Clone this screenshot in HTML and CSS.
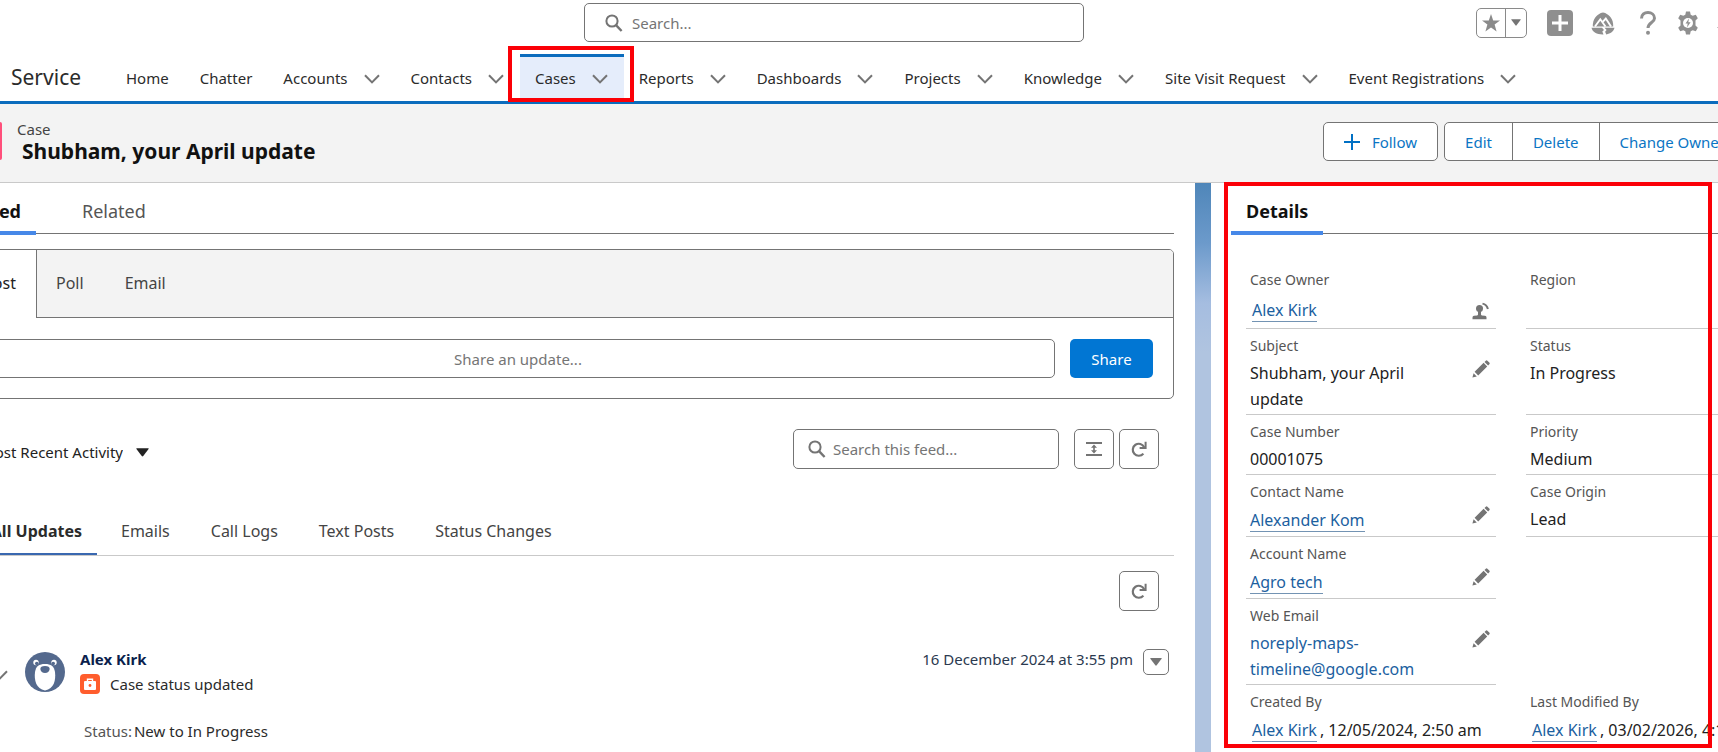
FILE: index.html
```html
<!DOCTYPE html>
<html lang="en">
<head>
<meta charset="utf-8">
<title>Case - Service</title>
<link rel="stylesheet" href="styles.css">
</head>
<body>
<svg class="defs" aria-hidden="true">
  <symbol id="chevron" viewBox="0 0 16 10"><path d="M1 1.2 8 8.4 15 1.2" fill="none" stroke="#747474" stroke-width="2"/></symbol>
  <symbol id="caret" viewBox="0 0 12 8"><path d="M.8 0h10.4q.9 0 .4.8L6.7 7.3q-.7.9-1.4 0L.4.8Q-.1 0 .8 0z" fill="currentColor"/></symbol>
  <symbol id="lens" viewBox="0 0 18 18"><circle cx="7" cy="7" r="5.6" fill="none" stroke="#747474" stroke-width="2"/><path d="M11 11.2 16.6 17" stroke="#747474" stroke-width="2.4"/></symbol>
  <symbol id="refresh" viewBox="0 0 16 16"><path d="M13.2 6.2A6 6 0 1 0 12.4 12.6" fill="none" stroke="#747474" stroke-width="2.2"/><path d="M14.6.8V7H8.6" fill="none" stroke="#747474" stroke-width="2"/></symbol>
  <symbol id="pencil" viewBox="0 0 18 18"><path d="M.4 17.6 1.6 13.200 4.800 16.400zM2.600 11.800 11.600 2.800 15.200 6.400 6.200 15.400zM12.500 1.900 13.800.7q.8-.7 1.600 0l1.900 1.900q.8.800 0 1.600L16.100 5.500z" fill="#747474"/></symbol>
</svg>

<header class="global">
  <label class="search">
    <svg width="18" height="18"><use href="#lens"/></svg>
    <input type="search" placeholder="Search..." aria-label="Search">
  </label>
  <div class="tools">
    <div class="favs">
      <button aria-label="Favorites"><svg width="18" height="18" viewBox="0 0 18 18"><path d="M9 0l2.200 6.400H18l-5.400 4.200 2 7L9 13.500l-5.600 4.100 2-7L0 6.400h6.800z" fill="#8a8a8a"/></svg></button>
      <button aria-label="Favorites list"><svg width="10" height="7"><use href="#caret"/></svg></button>
    </div>
    <button class="tool" aria-label="Create"><svg width="26" height="26" viewBox="0 0 26 26"><rect width="26" height="26" rx="4" fill="#8f8f8f"/><path d="M13 5v16M5 13h16" stroke="#fff" stroke-width="3"/></svg></button>
    <button class="tool" aria-label="Guidance"><svg width="24" height="24" viewBox="0 0 24 24"><path d="M1.800 15.500C1.500 8 5.500 4 9.800 1.900q2.200-1 4.400 0C18.500 4 22.500 8 22.200 15.500z" fill="#8f8f8f"/><path d="M4 15.500 9.300 8.300 14.500 15.500M11.500 11.200 14.800 7.500 20 15.500" fill="none" stroke="#fff" stroke-width="1.900"/><path d="M.5 16.800H11l2 2.200-1.700 1.600 1.200 2.900C6.500 23.800 1.500 21.500.5 16.800zM13.500 16.800h10c-.8 3.500-4 6-8.200 6.600l-1.200-2.600 1.500-1.700z" fill="#8f8f8f"/></svg></button>
    <button class="tool" aria-label="Help"><svg width="16" height="24" viewBox="0 0 16 24"><path d="M1.500 7.500C1.500 3.500 4.500 1.500 8 1.500s6.500 2.200 6.500 5.700C14.500 11.500 8 11.500 8 17" fill="none" stroke="#8f8f8f" stroke-width="3"/><circle cx="8" cy="21.800" r="2" fill="#8f8f8f"/></svg></button>
    <button class="tool" aria-label="Setup"><svg width="22" height="24" viewBox="0 0 22 24"><path d="M9 .5h4l.7 3.200 2 1.100 3.100-1 2 3.400-2.300 2.300v5l2.300 2.300-2 3.400-3.100-1-2 1.100-.7 3.200H9l-.7-3.200-2-1.100-3.100 1-2-3.400 2.300-2.300v-5L1.200 7.200l2-3.400 3.100 1 2-1.100z" fill="#8f8f8f"/><circle cx="11" cy="12" r="5" fill="#fff"/><path d="M12 7.500 8.500 12.600h2.200L10 16.500l3.600-5.200h-2.300z" fill="#8f8f8f"/></svg></button>
    <button class="tool" aria-label="Notifications"><svg width="22" height="24" viewBox="0 0 22 24"><path d="M0 17q2-2 3-4V9q1-6 8-7 7 1 8 7v4q1 2 3 4zM8 19h6q-1 4-3 4t-3-4z" fill="#8f8f8f"/></svg></button>
  </div>
</header>

<nav class="appnav">
  <span class="app">Service</span>
  <ul>
    <li><a href="#">Home</a></li>
    <li><a href="#">Chatter</a></li>
    <li><a href="#">Accounts</a><button aria-label="Accounts menu"><svg width="16" height="10"><use href="#chevron"/></svg></button></li>
    <li><a href="#">Contacts</a><button aria-label="Contacts menu"><svg width="16" height="10"><use href="#chevron"/></svg></button></li>
    <li class="active"><a href="#">Cases</a><button aria-label="Cases menu"><svg width="16" height="10"><use href="#chevron"/></svg></button></li>
    <li><a href="#">Reports</a><button aria-label="Reports menu"><svg width="16" height="10"><use href="#chevron"/></svg></button></li>
    <li><a href="#">Dashboards</a><button aria-label="Dashboards menu"><svg width="16" height="10"><use href="#chevron"/></svg></button></li>
    <li><a href="#">Projects</a><button aria-label="Projects menu"><svg width="16" height="10"><use href="#chevron"/></svg></button></li>
    <li><a href="#">Knowledge</a><button aria-label="Knowledge menu"><svg width="16" height="10"><use href="#chevron"/></svg></button></li>
    <li><a href="#">Site Visit Request</a><button aria-label="Site Visit Request menu"><svg width="16" height="10"><use href="#chevron"/></svg></button></li>
    <li><a href="#">Event Registrations</a><button aria-label="Event Registrations menu"><svg width="16" height="10"><use href="#chevron"/></svg></button></li>
  </ul>
</nav>

<section class="record">
  <span class="record-icon"></span>
  <div class="record-title">
    <p>Case</p>
    <h1>Shubham, your April update</h1>
  </div>
  <div class="actions">
    <button class="follow"><svg width="16" height="16" viewBox="0 0 16 16"><path d="M8 0v16M0 8h16" stroke="#0070c4" stroke-width="2"/></svg>Follow</button>
    <div class="group"><button>Edit</button><button>Delete</button><button>Change Owner</button></div>
  </div>
</section>

<main class="page">
  <section class="feed">
    <div class="tabs">
      <a href="#" class="tab on">Feed</a>
      <a href="#" class="tab">Related</a>
    </div>
    <div class="composer">
      <div class="pubs">
        <a href="#" class="on">Post</a>
        <div class="pubs-rest"><a href="#">Poll</a><a href="#">Email</a></div>
      </div>
      <form class="share">
        <input type="text" placeholder="Share an update..." aria-label="Share an update">
        <button type="button">Share</button>
      </form>
    </div>
    <div class="toolbar">
      <div class="sort">
        <select aria-label="Sort feed"><option>Most Recent Activity</option></select>
        <svg width="13" height="9"><use href="#caret"/></svg>
      </div>
      <label class="search feedsearch">
        <svg width="18" height="18"><use href="#lens"/></svg>
        <input type="search" placeholder="Search this feed..." aria-label="Search this feed">
      </label>
      <div class="pair">
        <button class="square" aria-label="Compact view"><svg width="16" height="14" viewBox="0 0 16 14"><path d="M0 1h16M0 13h16" stroke="#747474" stroke-width="2"/><path d="M8 2.500 11 5.800H5zM8 11.500 5 8.200h6zM7.200 4h1.600v6H7.200z" fill="#747474"/></svg></button>
        <button class="square" aria-label="Refresh feed"><svg width="16" height="16"><use href="#refresh"/></svg></button>
      </div>
    </div>
    <div class="filters">
      <a href="#" class="on">All Updates</a>
      <a href="#">Emails</a>
      <a href="#">Call Logs</a>
      <a href="#">Text Posts</a>
      <a href="#">Status Changes</a>
    </div>
    <div class="refresh-row"><button class="square" aria-label="Refresh updates"><svg width="16" height="16"><use href="#refresh"/></svg></button></div>
    <article class="post">
      <svg class="expand" width="16" height="10"><use href="#chevron"/></svg>
      <svg class="avatar" width="40" height="40" viewBox="0 0 40 40"><defs><clipPath id="round"><circle cx="20" cy="20" r="20"/></clipPath></defs><g clip-path="url(#round)"><rect width="40" height="40" fill="#54698d"/><circle cx="11" cy="10.500" r="2.700" fill="#fff"/><circle cx="29" cy="10.500" r="2.700" fill="#fff"/><circle cx="11.800" cy="11.500" r="1.800" fill="#54698d"/><circle cx="28.200" cy="11.500" r="1.800" fill="#54698d"/><path d="M20 12c6 0 9 2 10 8 1 8-1 17-10 18.500C11 37 9 28 10 20c1-6 4-8 10-8z" fill="#fff"/><path d="M15.300 17q0-3 4.700-3t4.700 3q-.7 4-4.700 4t-4.700-4z" fill="#54698d"/></g></svg>
      <div class="post-main">
        <div class="post-head">
          <a href="#" class="author">Alex Kirk</a>
          <time>16 December 2024 at 3:55 pm</time>
        </div>
        <div class="post-kind">
          <svg width="20" height="20" viewBox="0 0 20 20"><rect width="20" height="20" rx="4" fill="#ff5d2d"/><path d="M7.500 7V5.300h5V7" fill="none" stroke="#fff" stroke-width="1.400"/><rect x="4" y="7" width="12" height="9" rx="1" fill="#fff"/><circle cx="10" cy="11.500" r="1.400" fill="#ff5d2d"/></svg>
          <span>Case status updated</span>
        </div>
        <p class="post-body"><span>Status:</span><span>New to In Progress</span></p>
      </div>
      <button class="more" aria-label="Post actions"><svg width="12" height="8"><use href="#caret"/></svg></button>
    </article>
  </section>

  <div class="gutter"></div>

  <aside class="details">
    <div class="tabs"><a href="#" class="tab on">Details</a></div>
    <div class="fields">
      <div class="field owner"><h3>Case Owner</h3><div class="value"><a href="#">Alex Kirk</a></div><button aria-label="Change owner"><svg width="18" height="18" viewBox="0 0 18 18"><circle cx="7.500" cy="6.600" r="3.500" fill="#747474"/><path d="M6 9h3v3.500q0 .8.900.9l3.100.4q1.500.2 1.500 1.600v1.800h-14v-1.800q0-1.400 1.500-1.600l3.100-.4q.9-.1.900-.9z" fill="#747474"/><path d="M10.500 1.600Q14.800 2.600 15.900 7" fill="none" stroke="#747474" stroke-width="2"/></svg></button></div>
      <div class="field"><h3>Region</h3><div class="value"></div></div>

      <div class="field"><h3>Subject</h3><div class="value">Shubham, your April update</div><button aria-label="Edit Subject"><svg width="18" height="18"><use href="#pencil"/></svg></button></div>
      <div class="field"><h3>Status</h3><div class="value">In Progress</div></div>

      <div class="field"><h3>Case Number</h3><div class="value">00001075</div></div>
      <div class="field"><h3>Priority</h3><div class="value">Medium</div></div>

      <div class="field lookup"><h3>Contact Name</h3><div class="value"><a href="#">Alexander Kom</a></div><button aria-label="Edit Contact Name"><svg width="18" height="18"><use href="#pencil"/></svg></button></div>
      <div class="field"><h3>Case Origin</h3><div class="value">Lead</div></div>

      <div class="field lookup"><h3>Account Name</h3><div class="value"><a href="#">Agro tech</a></div><button aria-label="Edit Account Name"><svg width="18" height="18"><use href="#pencil"/></svg></button></div>
      <div class="blank"></div>

      <div class="field"><h3>Web Email</h3><div class="value"><a class="mail" href="#">noreply-maps-timeline@google.com</a></div><button aria-label="Edit Web Email"><svg width="18" height="18"><use href="#pencil"/></svg></button></div>
      <div class="blank"></div>

      <div class="field stamp"><h3>Created By</h3><div class="value"><a href="#">Alex Kirk</a>, 12/05/2024, 2:50 am</div></div>
      <div class="field stamp"><h3>Last Modified By</h3><div class="value"><a href="#">Alex Kirk</a>, 03/02/2026, 4:10 pm</div></div>
    </div>
  </aside>
</main>
<div class="mark mark-cases"></div>
<div class="mark mark-details"></div>
</body>
</html>
```
FILE: styles.css
```css
* { box-sizing: border-box; }
body {
  margin: 0;
  min-height: 100vh;
  display: flex;
  flex-direction: column;
  overflow: hidden;
  position: relative;
  background: #fff;
  color: #2b2b2b;
  font-family: "Noto Sans", "Open Sans", sans-serif;
  font-size: 15px;
  line-height: 20px;
}
h1, h3, p, ul { margin: 0; padding: 0; }
a { color: inherit; text-decoration: none; }
button, input, select { font: inherit; color: inherit; }
button { padding: 0; border: 0; background: none; display: flex; align-items: center; justify-content: center; }
svg { display: block; flex: none; }
.defs { position: absolute; width: 0; height: 0; }

/* global header */
.global {
  display: grid;
  grid-template-columns: 584fr 500fr 634fr;
  padding-top: 3px;
  height: 54px;
}
.search {
  grid-column: 2;
  display: flex;
  align-items: center;
  gap: 9px;
  height: 39px;
  padding: 0 20px;
  border: 1px solid #747474;
  border-radius: 5px;
}
.search input { flex: 1; min-width: 0; padding: 0; border: 0; outline: 0; background: none; appearance: none; }
input::placeholder { color: #757575; opacity: 1; }
.tools {
  display: flex;
  justify-content: flex-end;
  align-items: center;
  height: 39px;
  margin-right: -21px;
}
.tool { margin-left: 18px; }
.tool:nth-child(4) { margin-left: 25px; }
.tool:nth-child(5) { margin-left: 21px; }
.favs { display: flex; height: 30px; border: 1px solid #8a8a8a; border-radius: 5px; color: #747474; margin-right: 2px; }
.favs button { width: 20px; }
.favs button:first-child { width: 29px; border-right: 1px solid #8a8a8a; }

/* navigation */
.appnav { display: flex; height: 50px; border-bottom: 3px solid #0b6cbd; }
.app { width: 111px; padding: 0 0 0 11px; font-size: 21px; line-height: 47px; }
.appnav ul { display: flex; list-style: none; }
.appnav li { display: flex; align-items: center; gap: 16px; padding: 0 16px 0 15px; border-top: 3px solid transparent; white-space: nowrap; }
.appnav li a { line-height: 40px; padding-bottom: 2px; }
.appnav li.active { background: #e5edfb; border-top-color: #0b6cbd; }

/* record header */
.record {
  display: flex;
  height: 79px;
  padding-top: 15px;
  background: #f3f3f3;
  border-bottom: 1px solid #c9c9c9;
  white-space: nowrap;
}
.record-icon { width: 2px; height: 38px; margin-top: 3px; background: #ff4f7b; border-radius: 0 4px 4px 0; }
.record-title { flex: 1; padding-left: 15px; }
.record-title p { color: #444; }
.record-title h1 { padding-left: 5px; font-size: 21px; line-height: 24px; color: #111; }
.actions { display: flex; gap: 6px; margin: 3px -28px 0 0; color: #0b75c4; }
.actions button { height: 39px; padding: 0 20px; gap: 12px; }
.actions .group button { height: 37px; }
.actions .follow, .group { height: 39px; background: #fff; border: 1px solid #747474; border-radius: 5px; }
.group { display: flex; }
.group button + button { border-left: 1px solid #747474; }

/* page columns */
.page { flex: 1; display: grid; grid-template-columns: 1195fr 16px 507fr; }
.gutter { background: linear-gradient(#4f86b9 0, #6c9acb 60px, #a5bde0 120px, #b0c4e0 170px); }
.tabs { display: flex; border-bottom: 1px solid #747474; font-size: 18px; line-height: 24px; color: #555; }
.tab { padding: 16px 15px 8px; margin-bottom: -2px; border-bottom: 4px solid transparent; }
.tab.on { border-color: #4688e8; color: #111; font-weight: 700; }

/* feed column */
.feed { margin-left: -40px; padding-right: 21px; min-width: 0; }
.feed .tab.on { width: 76px; text-align: right; margin-right: 31px; }
.composer { margin-top: 15px; border: 1px solid #747474; border-radius: 5px; overflow: hidden; }
.pubs { display: flex; font-size: 16px; line-height: 67px; }
.pubs > .on { width: 75px; padding-right: 20px; text-align: right; color: #222; }
.pubs-rest { flex: 1; display: flex; gap: 41px; padding-left: 19px; background: #f3f3f3; color: #444; border-left: 1px solid #747474; border-bottom: 1px solid #747474; }
.share { display: flex; gap: 15px; padding: 21px 20px 20px; }
.share input { flex: 1; min-width: 0; height: 39px; border: 1px solid #747474; border-radius: 5px; text-align: center; }
.share button { width: 83px; height: 39px; border-radius: 5px; background: #0176d3; color: #fff; }
.toolbar { display: flex; align-items: center; margin-top: 30px; padding-right: 15px; }
.sort { flex: 1; display: flex; align-items: center; gap: 13px; color: #222; padding-top: 6px; }
.sort select { width: 163px; padding: 0; border: 0; background: none; appearance: none; text-align: right; }
.feedsearch { width: 266px; height: 40px; padding: 0 14px; gap: 7px; }
.pair { display: flex; gap: 5px; margin-left: 15px; }
.square { width: 40px; height: 40px; border: 1px solid #747474; border-radius: 5px; }
.filters { display: flex; margin-top: 50px; border-bottom: 1px solid #c9c9c9; font-size: 16px; line-height: 24px; color: #444; }
.filters a { margin-right: 41px; padding-bottom: 10px; }
.filters .on { width: 137px; margin-right: 24px; padding: 0 15px 10px 0; text-align: right; font-weight: 700; border-bottom: 2px solid #3a68b0; color: #2b2b2b; white-space: nowrap; }
.refresh-row { display: flex; justify-content: flex-end; padding: 15px 15px 0 0; }
.post { display: flex; margin-top: 37px; padding: 0 5px 0 32px; }
.expand { margin-top: 22px; }
.avatar { margin: 4px 15px 0 17px; }
.post-main { flex: 1; }
.post-head { display: flex; justify-content: space-between; line-height: 22px; }
.author { font-weight: 700; color: #0b1f4d; }
.post-head time { color: #2b3a50; }
.post-kind { display: flex; align-items: center; gap: 10px; margin-top: 4px; }
.post-body { display: flex; gap: 2px; margin: 27px 0 0 4px; color: #2b2b2b; }
.post-body span:first-child { color: #555; }
.more { width: 26px; height: 26px; margin: 1px 0 0 10px; border: 1px solid #747474; border-radius: 5px; color: #747474; }

/* details column */
.details { margin-right: -58px; padding-left: 20px; min-width: 0; }
.fields { display: grid; grid-template-columns: 250fr 250fr; column-gap: 30px; padding: 29px 0 0 15px; }
.field { display: grid; grid-template-columns: 190px 1fr; align-content: start; padding: 7px 6px 2px 4px; border-bottom: 1px solid #c9c9c9; }
.field h3 { grid-column: 1 / -1; margin-bottom: 4px; font-size: 14px; font-weight: 400; color: #555; }
.value { font-size: 16px; line-height: 26px; color: #222; overflow-wrap: break-word; }
.value a { color: #1c5f9f; border-bottom: 1px solid #7393b3; }
.value a.mail { border: 0; }
.field button { width: 18px; height: 18px; justify-self: end; }
.lookup { padding-bottom: 1px; }
.lookup .value { line-height: 29px; }
.owner .value { line-height: 32px; padding-left: 2px; }
.owner button { margin-top: 8px; }
.stamp { grid-template-columns: 1fr; border: 0; white-space: nowrap; }
.stamp .value { line-height: 28px; padding-left: 2px; }
.stamp a { margin-right: 3px; }

/* highlight frames drawn over the page */
.mark { position: absolute; border: 4px solid #fb0007; pointer-events: none; }
.mark-cases { left: 508px; top: 46px; width: 126px; height: 56px; }
.mark-details { left: 1224px; right: 6px; top: 182px; height: 566px; }
```
